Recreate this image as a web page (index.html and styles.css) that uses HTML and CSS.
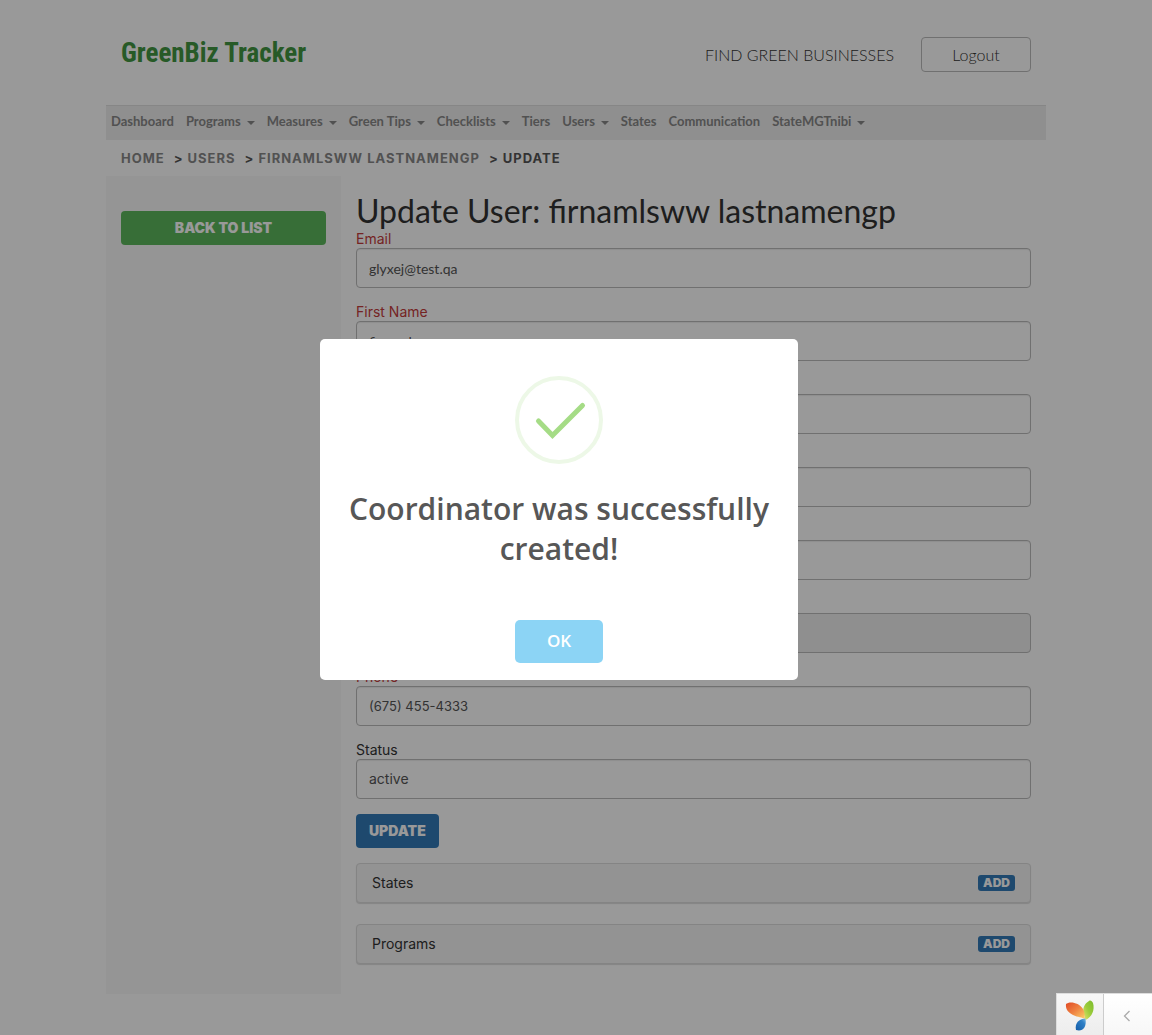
FILE: index.html
```html
<!DOCTYPE html>
<html lang="en">
<head>
<meta charset="utf-8">
<meta name="viewport" content="width=device-width, initial-scale=1">
<title>Update User</title>
<link rel="stylesheet" href="styles.css">
</head>
<body>
<div class="container">
  <header class="header">
    <a class="logo" href="#">GreenBiz Tracker</a>
    <div class="header-links">
      <a class="find" href="#">FIND GREEN BUSINESSES</a>
      <button class="logout" type="button">Logout</button>
    </div>
  </header>
  <nav class="nav">
    <a href="#">Dashboard</a>
    <a class="drop" href="#">Programs</a>
    <a class="drop" href="#">Measures</a>
    <a class="drop" href="#">Green Tips</a>
    <a class="drop" href="#">Checklists</a>
    <a href="#">Tiers</a>
    <a class="drop" href="#">Users</a>
    <a href="#">States</a>
    <a href="#">Communication</a>
    <a class="drop" href="#">StateMGTnibi</a>
  </nav>
  <ol class="breadcrumb">
    <li><a href="#">HOME</a></li>
    <li><a href="#">USERS</a></li>
    <li><a href="#">FIRNAMLSWW LASTNAMENGP</a></li>
    <li>UPDATE</li>
  </ol>
  <div class="columns">
    <aside class="sidebar"><button class="btn btn-green" type="button">BACK TO LIST</button></aside>
    <main class="content">
      <h1>Update User: firnamlsww lastnamengp</h1>
      <form>
        <div class="field required"><label for="email">Email</label><input id="email" type="text" value="glyxej@test.qa"></div>
        <div class="field required"><label for="first">First Name</label><input id="first" type="text" value="firnamlsww"></div>
        <div class="field required"><label for="last">Last Name</label><input id="last" type="text" value="lastnamengp"></div>
        <div class="field"><label for="title">Title</label><input id="title" type="text"></div>
        <div class="field"><input id="password" type="password" aria-label="Password"></div>
        <div class="field"><label for="role">Role</label><input id="role" type="text" disabled></div>
        <div class="field required"><label for="phone">Phone</label><input class="phone-text" id="phone" type="text" value="(675) 455-4333"></div>
        <div class="field"><label for="status">Status</label><select id="status"><option>active</option></select></div>
        <button class="btn btn-blue" type="button">UPDATE</button>
      </form>
      <section class="panel"><span>States</span><button class="add" type="button">ADD</button></section>
      <section class="panel"><span>Programs</span><button class="add" type="button">ADD</button></section>
    </main>
  </div>
</div>
<div class="overlay"></div>
<div class="modal" role="dialog" aria-labelledby="modal-title">
  <svg class="check" viewBox="0 0 88 88" width="88" height="88" aria-hidden="true">
    <circle cx="44" cy="44" r="42" fill="none" stroke="#edf8e7" stroke-width="4"/>
    <path d="M23.500 45L37.500 59.500L67.500 29.500" fill="none" stroke="#a5dc86" stroke-width="5" stroke-linecap="round"/>
  </svg>
  <h2 id="modal-title">Coordinator was successfully created!</h2>
  <button class="ok" type="button">OK</button>
</div>
<div class="toolbar">
  <a class="yii" href="#" aria-label="Debugger">
    <svg viewBox="0 0 30 32" width="30" height="32" aria-hidden="true">
      <defs>
        <linearGradient id="red" x1="0" y1="0" x2="1" y2="1"><stop offset="0" stop-color="#e04a25"/><stop offset=".5" stop-color="#ef8341"/><stop offset="1" stop-color="#fbd36a"/></linearGradient>
        <linearGradient id="green" x1="0" y1="1" x2="1" y2="0"><stop offset="0" stop-color="#e5e56f"/><stop offset=".5" stop-color="#9bcb3b"/><stop offset="1" stop-color="#7cbc2c"/></linearGradient>
        <linearGradient id="blue" x1="0" y1="1" x2="1" y2="0"><stop offset="0" stop-color="#155da8"/><stop offset=".7" stop-color="#2f80c6"/><stop offset="1" stop-color="#7fbde6"/></linearGradient>
      </defs>
      <path fill="url(#green)" d="M24 1C19 4 17 9 19 15C20 17 20 18 20.500 20C27 17 30 10 28 3C27 1 25.500 0 24 1Z"/>
      <path fill="url(#red)" d="M1 4C4 1 14 2 18 9C20 12 19.500 16 20 19C17 17 13 17.500 8 15C2 12 .5 8 1 4Z"/>
      <path fill="url(#blue)" d="M20.500 18.500C14 19 9.500 23 11 30C17 32 22 28 20.500 18.500Z"/>
    </svg>
  </a>
  <button class="toggle" type="button" aria-label="Expand toolbar">
    <svg viewBox="0 0 8 12" width="8" height="12" aria-hidden="true"><path d="M6.500 1L1.500 6L6.500 11" fill="none" stroke="#aaa" stroke-width="1.300"/></svg>
  </button>
</div>
</body>
</html>
```
FILE: styles.css
```css
* { box-sizing: border-box; }
body { margin: 0; background: #fff; color: #333; font: 14px/18px Inter, sans-serif; }
a { color: inherit; text-decoration: none; }
button, input, select { font: inherit; color: inherit; }
button { margin: 0; }
.container { max-width: 940px; margin: 0 auto; }

.header { height: 105px; padding: 0 15px; display: flex; align-items: center; justify-content: space-between; }
.logo { color: #419641; font: bold 27px/36px "Roboto Condensed", "Liberation Sans Narrow", Roboto, sans-serif; }
.header-links { display: flex; align-items: center; gap: 27px; padding-top: 4px; font: 300 16px/20px Lato, sans-serif; color: #333; }
.logout { width: 110px; height: 35px; border: 1px solid #bbb; border-radius: 4px; background: none; }

.nav { display: flex; flex-wrap: wrap; gap: 12px; min-height: 35px; padding: 5px; background: #eee; border-top: 1px solid #e0e0e0; color: #888; font: bold 13px/20px Lato, sans-serif; }
.drop::after { content: ""; display: inline-block; margin-left: 6px; vertical-align: 1px; border: 4px solid transparent; border-top-color: currentColor; border-bottom: 0; }

.breadcrumb { display: flex; flex-wrap: wrap; gap: 9px; margin: 0; padding: 8px 15px; list-style: none; font: bold 13px/20px Inter, sans-serif; letter-spacing: 1px; }
.breadcrumb li + li::before { content: ">"; margin-right: 4px; }
.breadcrumb a { color: #888; }
.breadcrumb li { color: #555; }

.columns { display: grid; grid-template-columns: 1fr 3fr; }
.sidebar { background: #f8f8f8; padding: 35px 15px; }
.content { padding: 17px 15px 30px; }
h1 { margin: 0; font: 400 32px/36px Lato, sans-serif; padding-bottom: 1px; }
.field { display: flex; flex-direction: column; justify-content: flex-end; min-height: 58px; margin-bottom: 15px; }
.required label { color: #c43c3c; }
.field input, .field select { width: 100%; height: 40px; padding: 0 12px; border: 1px solid #bbb; border-radius: 4px; background: #fff; color: #555; box-shadow: inset 0 1px 1px #eee; appearance: none; }
.field input { font-family: Lato, sans-serif; }
.field .phone-text { font-family: Inter, sans-serif; font-size: 13px; }
.field input:disabled { background: #eee; }
.btn { height: 34px; border: 0; border-radius: 4px; padding: 0 13px; color: #fff; font-weight: 900; }
.btn-green { width: 100%; background: #5cb85c; }
.btn-blue { background: #337ab7; }
.panel { display: flex; justify-content: space-between; align-items: center; height: 40px; margin-top: 21px; padding: 0 15px 1px; border: 1px solid #ddd; border-radius: 4px; background: #f5f5f5; box-shadow: 0 1px 1px #ddd; }
form + .panel { margin-top: 15px; }
.add { height: 16px; padding: 0 5px; border: 0; border-radius: 3px; background: #337ab7; color: #fff; font-size: 12px; line-height: 16px; font-weight: 900; }

.overlay { position: fixed; inset: 0; background: rgba(0, 0, 0, .4); }
.modal { position: fixed; left: 50%; top: 50%; width: 478px; margin: -179px 0 0 -256px; padding: 37px 17px 17px; display: flex; flex-direction: column; align-items: center; background: #fff; border-radius: 5px; font-family: "Open Sans", sans-serif; }
.modal h2 { margin: 25px 0 51px; color: #575757; text-align: center; font-size: 30px; line-height: 40px; font-weight: 600; }
.ok { width: 88px; height: 43px; border: 0; border-radius: 5px; background: #8cd4f5; color: #fff; font-size: 17px; font-weight: 600; }
.toolbar { position: fixed; right: 0; bottom: 0; display: flex; width: 96px; height: 42px; border: 1px solid #ddd; border-width: 1px 0 0 1px; background: #fff; }
.yii { width: 47px; display: grid; place-items: center; padding-top: 2px; background: linear-gradient(#f7f7f7, #ededed); border-right: 1px solid #ccc; }
.toggle { flex: 1; display: grid; place-items: center; border: 0; padding: 3px 3px 0 0; background: linear-gradient(#fff, #f7f7f7); }
```
